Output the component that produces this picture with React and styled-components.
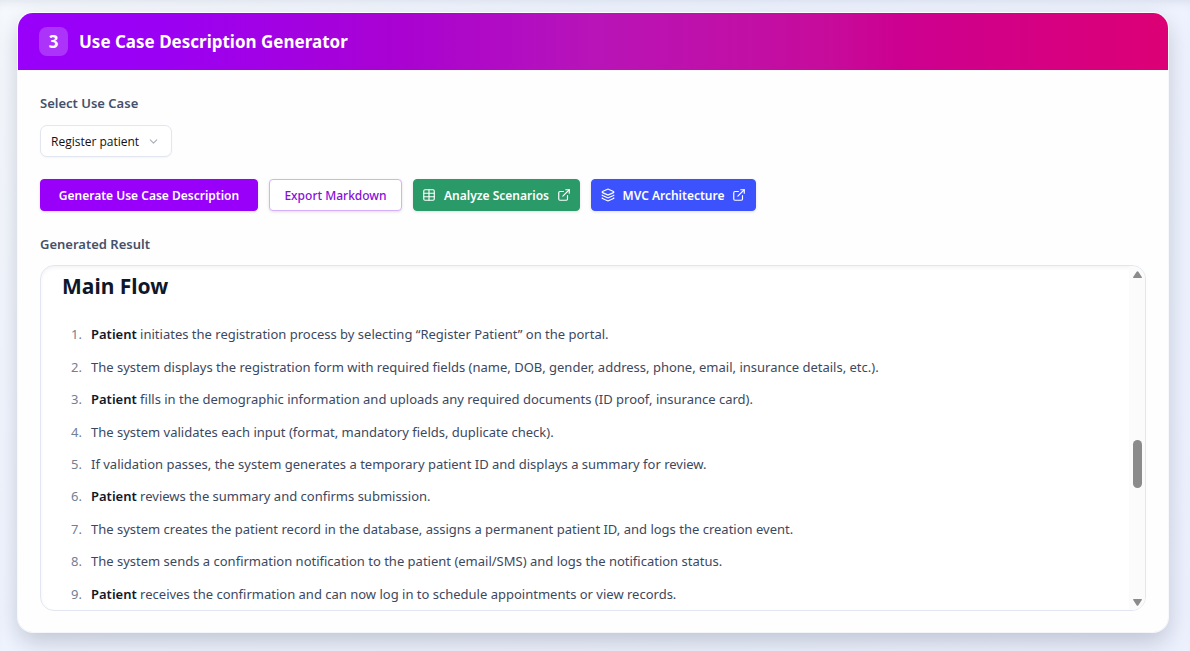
import React, { useState } from 'react';
import styled, { createGlobalStyle } from 'styled-components';
import { ChevronDown, ExternalLink, Layers, Table } from 'lucide-react';

const GlobalStyle = createGlobalStyle`
  * {
    box-sizing: border-box;
  }
  body {
    margin: 0;
    font-family: 'Segoe UI', 'Noto Sans', 'Open Sans', sans-serif;
    background: #eff3fd;
  }
`;

const Page = styled.main`
  min-height: 100vh;
  padding: 12px 21px 18px 17px;
  background: linear-gradient(135deg, #f6f9fd 0%, #eff4ff 35%, #edf1fe 100%);
  box-shadow: inset 0 8px 12px -8px rgba(30, 41, 80, 0.14);
  overflow: hidden;
`;

const Card = styled.section`
  border: 1px solid rgba(255, 255, 255, 0.8);
  border-radius: 16px;
  background: #fefeff;
  background-clip: padding-box;
  box-shadow: 0 10px 24px -2px rgba(15, 23, 42, 0.22);
  overflow: hidden;
`;

const CardHeader = styled.header`
  display: flex;
  align-items: center;
  gap: 11px;
  height: 57px;
  padding: 0 21px;
  color: #fff;
  background: linear-gradient(90deg, #9800fa 0%, #9a00f4 12%, #a902d2 33%, #b814b8 50%, #c60c9c 70%, #cd0090 77%, #dd0076 100%);
`;

const StepBadge = styled.span`
  display: flex;
  align-items: center;
  justify-content: center;
  width: 29px;
  height: 29px;
  border-radius: 8px;
  background: rgba(255, 255, 255, 0.2);
  font-size: 17px;
  font-weight: 700;
`;

const Title = styled.h2`
  margin: 0;
  font-size: 17px;
  font-weight: 700;
`;

const CardBody = styled.div`
  padding: 22px 22px 21px;
`;

const Label = styled.label`
  display: block;
  margin-bottom: ${(props) => props.$gap || '11px'};
  font-size: 13px;
  font-weight: 600;
  line-height: 22px;
  color: #45516a;
`;

const SelectWrap = styled.div`
  display: inline-grid;
  align-items: center;
  vertical-align: top;

  > * {
    grid-area: 1 / 1;
  }
  > svg {
    justify-self: end;
    margin-right: 12px;
    color: #a9adb5;
    pointer-events: none;
  }
`;

const Select = styled.select`
  appearance: none;
  width: 132px;
  height: 32px;
  padding: 0 28px 0 10px;
  border: 1px solid #e2e6f0;
  border-radius: 7px;
  background: #fff;
  box-shadow: 0 1px 2px rgba(0, 0, 0, 0.04);
  color: #111;
  font-family: 'Segoe UI', 'Open Sans', sans-serif;
  font-size: 12px;
`;

const Actions = styled.div`
  display: flex;
  flex-wrap: wrap;
  gap: 11px;
  margin: 22px 0;
`;

const Button = styled.button`
  display: flex;
  align-items: center;
  justify-content: center;
  gap: 8px;
  width: ${(props) => props.$width};
  height: 32px;
  padding: 0;
  border: 1px solid ${(props) => props.$border || props.$bg};
  border-radius: 4px;
  background: ${(props) => props.$bg};
  box-shadow: 0 1px 3px rgba(0, 0, 0, 0.12);
  color: ${(props) => props.$color || '#fff'};
  font-family: inherit;
  font-size: 12px;
  font-weight: ${(props) => props.$weight || 600};
  white-space: nowrap;
`;

const Result = styled.div`
  display: flex;
  height: 346px;
  border: 1px solid #e1e6f0;
  border-radius: 14px;
  background: #fff;
  box-shadow: inset 0 2px 4px rgba(0, 0, 0, 0.05);
  overflow: hidden;
`;

const ResultText = styled.div`
  display: flex;
  flex: 1;
  flex-direction: column;
  padding-left: 21px;
`;

const Heading = styled.h2`
  margin: 0 0 12px;
  font-size: 21px;
  font-weight: 700;
  line-height: 40px;
  color: #0f172a;
`;

const Steps = styled.ol`
  display: grid;
  flex: 1;
  grid-auto-rows: 1fr;
  align-items: center;
  margin: 0;
  padding: 0;
  list-style: none;
  counter-reset: step;
`;

const Step = styled.li`
  display: flex;
  gap: 9px;
  font-size: 13px;
  line-height: 24px;
  color: #3c4860;

  &::before {
    counter-increment: step;
    content: counter(step) '.';
    width: 20px;
    text-align: right;
    color: #718096;
  }

  strong {
    font-weight: 600;
    color: #0f172a;
  }
`;

const ScrollTrack = styled.div`
  display: flex;
  flex-direction: column;
  align-items: center;
  width: 16px;
  padding: 5px 0 4px;
  background: #fbfbfb;
`;

const ScrollThumb = styled.div`
  width: 9px;
  height: 48px;
  margin: 162px 0 auto;
  border-radius: 5px;
  background: #8b8b8b;
`;

const Arrow = ({ down }) => (
  <svg width="9" height="7" viewBox="0 0 9 7" fill="#8b8b8b">
    <path d={down ? 'M.6 0h7.8q.9 0 .4 1L5.4 6.2q-.9 1.2-1.8 0L.2 1Q-.3 0 .6 0z' : 'M.6 7h7.8q.9 0 .4-1L5.4.8q-.9-1.2-1.8 0L.2 6Q-.3 7 .6 7z'} />
  </svg>
);

const steps = [
  { actor: 'Patient', text: ' initiates the registration process by selecting “Register Patient” on the portal.' },
  { text: 'The system displays the registration form with required fields (name, DOB, gender, address, phone, email, insurance details, etc.).' },
  { actor: 'Patient', text: ' fills in the demographic information and uploads any required documents (ID proof, insurance card).' },
  { text: 'The system validates each input (format, mandatory fields, duplicate check).' },
  { text: 'If validation passes, the system generates a temporary patient ID and displays a summary for review.' },
  { actor: 'Patient', text: ' reviews the summary and confirms submission.' },
  { text: 'The system creates the patient record in the database, assigns a permanent patient ID, and logs the creation event.' },
  { text: 'The system sends a confirmation notification to the patient (email/SMS) and logs the notification status.' },
  { actor: 'Patient', text: ' receives the confirmation and can now log in to schedule appointments or view records.' },
];

const App = () => {
  const [useCase, setUseCase] = useState('Register patient');

  return (
    <Page>
      <GlobalStyle />
      <Card>
        <CardHeader>
          <StepBadge>3</StepBadge>
          <Title>Use Case Description Generator</Title>
        </CardHeader>
        <CardBody>
          <Label htmlFor="use-case">Select Use Case</Label>
          <SelectWrap>
            <Select id="use-case" value={useCase} onChange={(e) => setUseCase(e.target.value)}>
              <option>Register patient</option>
            </Select>
            <ChevronDown size={13} strokeWidth={2} />
          </SelectWrap>
          <Actions>
            <Button $width="218px" $bg="#9800fa">Generate Use Case Description</Button>
            <Button $width="133px" $bg="#fff" $border="#d6b0fb" $color="#8510d8" $weight={500}>Export Markdown</Button>
            <Button $width="167px" $bg="#2a9a68">
              <Table size={14} />
              Analyze Scenarios
              <ExternalLink size={14} />
            </Button>
            <Button $width="165px" $bg="#3b52fc">
              <Layers size={14} />
              MVC Architecture
              <ExternalLink size={14} />
            </Button>
          </Actions>
          <Label as="div" id="result-label" $gap="10px">Generated Result</Label>
          <Result role="region" aria-labelledby="result-label">
            <ResultText>
              <Heading>Main Flow</Heading>
              <Steps>
                {steps.map((step, index) => (
                  <Step key={index}>
                    <span>
                      {step.actor && <strong>{step.actor}</strong>}
                      {step.text}
                    </span>
                  </Step>
                ))}
              </Steps>
            </ResultText>
            <ScrollTrack>
              <Arrow />
              <ScrollThumb />
              <Arrow down />
            </ScrollTrack>
          </Result>
        </CardBody>
      </Card>
    </Page>
  );
};

export default App;
